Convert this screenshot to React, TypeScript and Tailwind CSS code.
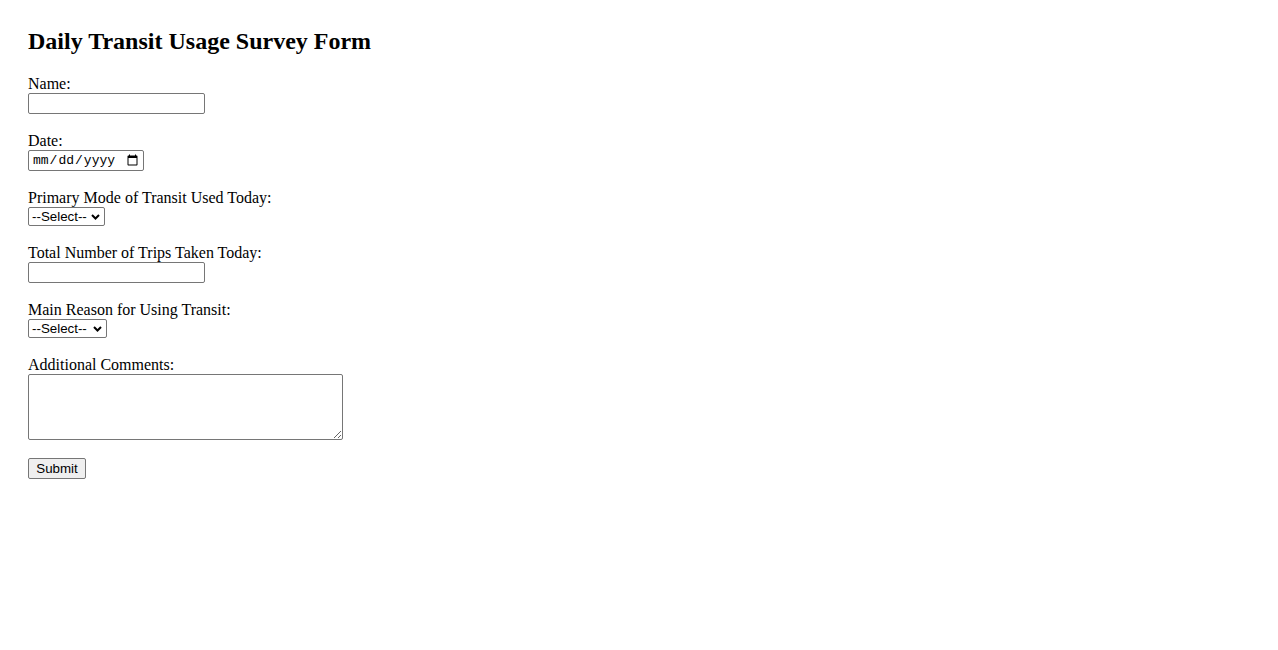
import React from "react";

const serif = { fontFamily: '"Liberation Serif", "Times New Roman", serif' };

function Chevron() {
  return (
    <svg
      width="9"
      height="6"
      viewBox="0 0 9 6"
      className="pointer-events-none absolute right-[5px] top-[7px]"
      aria-hidden="true"
    >
      <path d="M1 1l3.5 3.5L8 1" fill="none" stroke="#000" strokeWidth="2" />
    </svg>
  );
}

function Select({ width, options }: { width: string; options: string[] }) {
  return (
    <div className={`relative ${width}`}>
      <select className="block h-[19px] w-full appearance-none rounded-[2px] border border-[#767676] bg-white pl-[3px] pr-[14px] font-['Liberation_Sans',Arial,sans-serif] text-[13.333px] leading-[17px] text-black">
        {options.map((o) => (
          <option key={o}>{o}</option>
        ))}
      </select>
      <Chevron />
    </div>
  );
}

function Field({ label, children }: { label: string; children: React.ReactNode }) {
  return (
    <div className="mb-[17px] flex flex-col items-start">
      <label className="block h-[19px] text-[16px] leading-[19px]">{label}</label>
      {children}
    </div>
  );
}

export default function App() {
  return (
    <div className="min-h-[650px] bg-white pl-[28px] pt-[27px] text-black" style={serif}>
      <h2 className="mb-[19px] text-[24px] font-bold leading-[28px]">Daily Transit Usage Survey Form</h2>
      <form className="flex flex-col items-start" onSubmit={(e) => e.preventDefault()}>
        <Field label="Name:">
          <input
            type="text"
            className="block h-[21px] w-[177px] rounded-[2px] border border-[#767676] bg-white px-[2px] font-['Liberation_Sans',Arial,sans-serif] text-[13.333px]"
          />
        </Field>

        <Field label="Date:">
          <input
            type="date"
            className="block h-[21px] w-[116px] rounded-[2px] border border-[#767676] bg-white pl-[3px] pr-[2px] font-['Liberation_Mono','Courier_New',monospace] text-[13px]"
          />
        </Field>

        <Field label="Primary Mode of Transit Used Today:">
          <Select width="w-[77px]" options={["--Select--", "Bus", "Train", "Subway", "Bicycle", "Walking"]} />
        </Field>

        <Field label="Total Number of Trips Taken Today:">
          <input
            type="number"
            className="block h-[21px] w-[177px] rounded-[2px] border border-[#767676] bg-white px-[2px] font-['Liberation_Sans',Arial,sans-serif] text-[13.333px]"
          />
        </Field>

        <Field label="Main Reason for Using Transit:">
          <Select width="w-[79px]" options={["--Select--", "Work", "School", "Errands", "Leisure", "Other"]} />
        </Field>

        <div className="mb-[18px] flex flex-col items-start">
          <label className="block h-[19px] text-[16px] leading-[19px]">Additional Comments:</label>
          <textarea className="block h-[66px] w-[315px] rounded-[2px] border border-[#767676] bg-white p-[2px] font-['Liberation_Mono',monospace] text-[13.333px]" />
        </div>

        <button
          type="submit"
          className="h-[21px] w-[58px] rounded-[2px] border border-[#767676] bg-[#efefef] font-['Liberation_Sans',Arial,sans-serif] text-[13.333px] leading-[17px] text-black"
        >
          Submit
        </button>
      </form>
    </div>
  );
}
